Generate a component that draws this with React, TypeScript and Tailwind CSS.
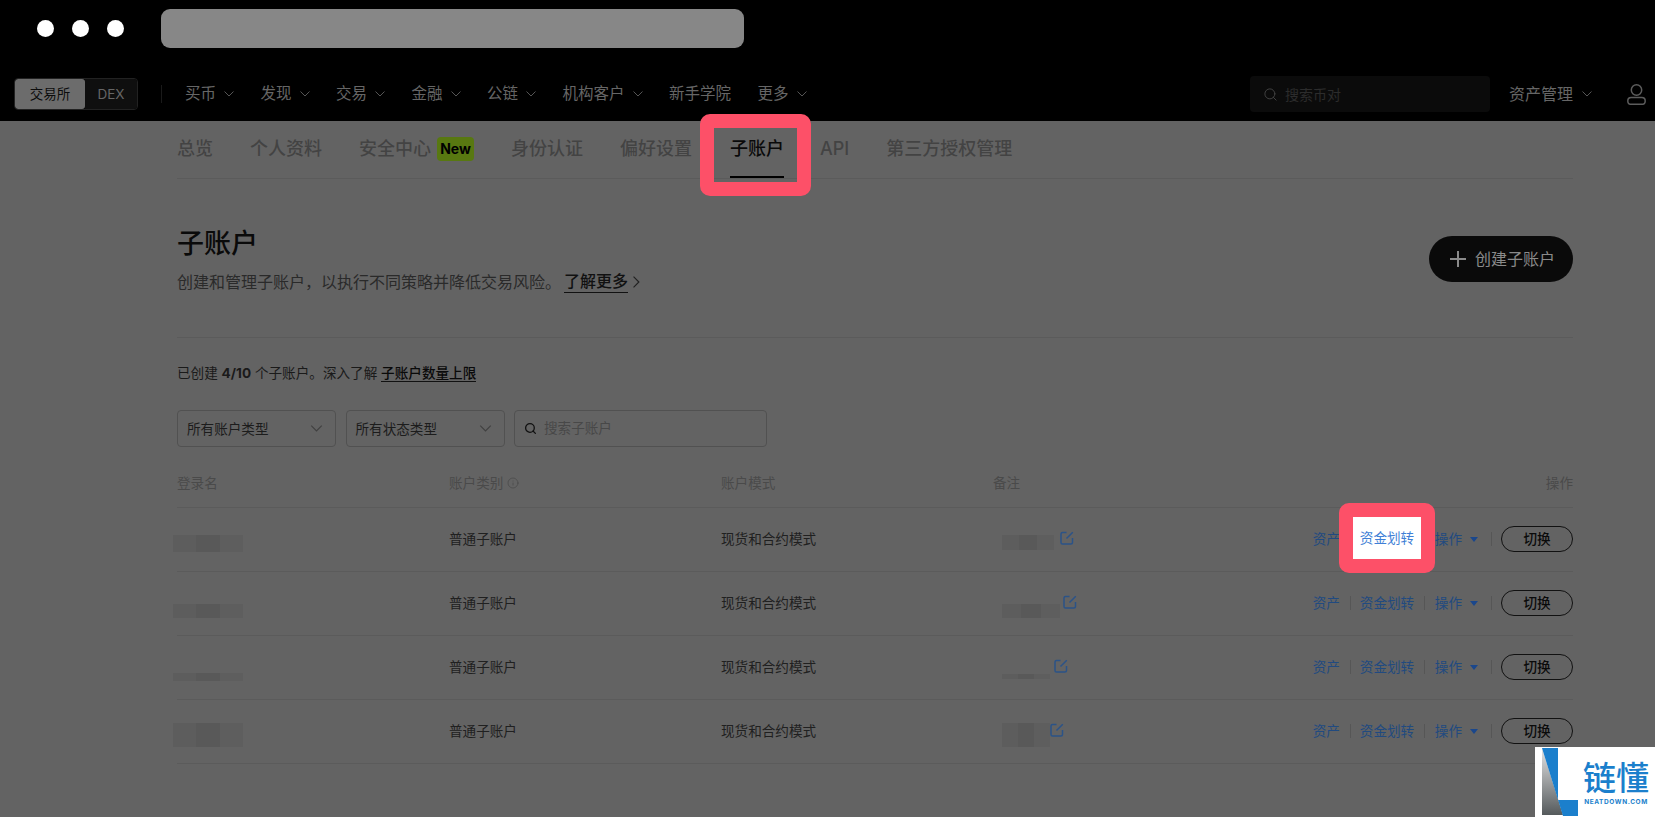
import { Info, Search } from 'lucide-react'

const navItems = [
  { label: '买币', arrow: true },
  { label: '发现', arrow: true },
  { label: '交易', arrow: true },
  { label: '金融', arrow: true },
  { label: '公链', arrow: true },
  { label: '机构客户', arrow: true },
  { label: '新手学院', arrow: false },
  { label: '更多', arrow: true },
]

const tabs = ['总览', '个人资料', '安全中心', '身份认证', '偏好设置', '子账户', 'API', '第三方授权管理']

// blurred-out names and notes sit at different heights per row
const rows = [
  {
    name: 'mt-[27px] h-[17px]',
    note: 'mt-[27px] h-[15px] w-[52px]',
    edit: 'ml-[6px]',
  },
  {
    name: 'mt-[32px] h-[14px]',
    note: 'mt-[32px] h-[14px] w-[58px]',
    edit: 'ml-[3px]',
  },
  {
    name: 'mt-[37px] h-[8px]',
    note: 'mt-[38px] h-[5px] w-[48px]',
    edit: 'ml-[4px]',
  },
  {
    name: 'mt-[23px] h-[24px]',
    note: 'mt-[23px] h-[24px] w-[48px]',
    edit: 'ml-[0px]',
  },
]

function Chevron({ className }: { className?: string }) {
  return (
    <svg viewBox="0 0 10 6" fill="none" stroke="currentColor" strokeWidth="1" className={className}>
      <path d="M0.5 0.5L5 5L9.5 0.5" />
    </svg>
  )
}

function EditIcon({ className }: { className?: string }) {
  return (
    <svg viewBox="0 0 14 14" fill="none" stroke="currentColor" strokeWidth="1.5" className={className}>
      <path d="M6.5 1.5H2.5C1.7 1.5 1 2.2 1 3V11.5C1 12.3 1.7 13 2.5 13H11C11.8 13 12.5 12.3 12.5 11.5V7" />
      <path d="M6.5 7.5L12.8 1.2" />
    </svg>
  )
}

function Mosaic({ className }: { className: string }) {
  return (
    <div className={`flex ${className}`}>
      <div className="h-full flex-1 bg-[#5d5d5d]" />
      <div className="h-full flex-1 bg-[#595959]" />
      <div className="h-full flex-1 bg-[#5e5e5e]" />
    </div>
  )
}

function Header() {
  return (
    <header className="h-[121px] bg-black">
      <div className="flex h-[48px] items-end pl-[37px]">
        <div className="flex h-[39px] items-center gap-[18px]">
          <span className="h-[17px] w-[17px] rounded-full bg-white" />
          <span className="h-[17px] w-[17px] rounded-full bg-white" />
          <span className="h-[17px] w-[17px] rounded-full bg-white" />
          <div className="ml-[19px] h-[39px] w-[583px] rounded-[9px] bg-[#878787]" />
        </div>
      </div>
      <div className="mt-[28px] flex h-[36px] items-center pl-[14px] pr-[9px]">
        <div className="flex h-[32px] w-[124px] overflow-hidden rounded-[4px] border border-[#222] text-[13.5px]">
          <div className="flex w-[70px] items-center justify-center rounded-[3px] bg-[#6c6c6c] text-[#0c0c0c]">交易所</div>
          <div className="flex flex-1 items-center justify-center bg-[#0f0f0f] text-[#666]">DEX</div>
        </div>
        <div className="ml-[23px] h-[18px] w-px bg-[#1a1a1a]" />
        <nav className="ml-[23px] flex items-center gap-[26.5px] text-[15.5px] text-[#666]">
          {navItems.map((item) => (
            <div key={item.label} className="flex items-center gap-[8px]">
              <span>{item.label}</span>
              {item.arrow && <Chevron className="h-[6px] w-[10px] text-[#555]" />}
            </div>
          ))}
        </nav>
        <div className="ml-auto flex h-[36px] w-[240px] items-center gap-[7px] rounded-[4px] bg-[#0b0b0b] pl-[13px] text-[14px] text-[#2c2c2c]">
          <Search size={15} strokeWidth={1.5} className="text-[#444]" />
          <span>搜索币对</span>
        </div>
        <div className="ml-[19px] flex items-center gap-[9px] text-[16px] text-[#666]">
          <span>资产管理</span>
          <Chevron className="h-[6px] w-[10px] text-[#555]" />
        </div>
        <svg viewBox="0 0 19 21" fill="none" stroke="#5c5c5c" strokeWidth="1.5" className="ml-[35px] h-[21px] w-[19px]">
          <circle cx="9.5" cy="6" r="5.2" />
          <rect x="0.8" y="13.6" width="17.4" height="6.7" rx="3.35" />
        </svg>
      </div>
    </header>
  )
}

function Tabs() {
  return (
    <div className="flex h-[58px] gap-[37px] border-b border-[#5b5b5b] pt-[15px] text-[18px] leading-[26px] text-[#434343]">
      {tabs.map((tab) =>
        tab === '子账户' ? (
          <div key={tab} className="ml-[1px] mr-[-1px] border-b-2 border-black font-medium text-[#0a0a0a]">
            {tab}
          </div>
        ) : (
          <div key={tab} className="flex h-[26px] items-center gap-[6px] font-medium">
            <span>{tab}</span>
            {tab === '安全中心' && (
              <span className="flex h-[24px] w-[37px] items-center justify-center rounded-[4px] bg-[#587811] text-[14px] font-bold text-black">
                New
              </span>
            )}
          </div>
        ),
      )}
    </div>
  )
}

function TableRow({ row }: { row: (typeof rows)[number] }) {
  return (
    <div className="grid h-[64px] grid-cols-[272px_272px_272px_1fr_auto] items-center border-b border-[#5b5b5b] pb-[1px] text-[13.6px] text-[#202020]">
      <div className="ml-[-4px] flex h-full items-start">
        <Mosaic className={`w-[70px] ${row.name}`} />
      </div>
      <div>普通子账户</div>
      <div>现货和合约模式</div>
      <div className="flex h-full items-start pl-[9px]">
        <Mosaic className={row.note} />
        <EditIcon className={`mt-[23px] h-[14px] w-[14px] text-[#2b5388] ${row.edit}`} />
      </div>
      <div className="flex items-center text-[#214a80]">
        <span>资产</span>
        <span className="ml-[10px] h-[14px] w-px bg-[#565656]" />
        <span className="ml-[9px]">资金划转</span>
        <span className="ml-[9.6px] h-[14px] w-px bg-[#565656]" />
        <span className="ml-[10px]">操作</span>
        <svg viewBox="0 0 8 5" className="ml-[8px] h-[5px] w-[8px] fill-[#1a478c]">
          <path d="M0 0H8L4 5Z" />
        </svg>
        <span className="ml-[13px] h-[14px] w-px bg-[#565656]" />
        <button className="ml-[9px] flex h-[26px] w-[72px] items-center justify-center rounded-full border border-[#111] font-medium text-[#0a0a0a]">
          切换
        </button>
      </div>
    </div>
  )
}

function Watermark() {
  return (
    <div className="absolute bottom-0 right-0 flex h-[70px] w-[120px] bg-white">
      <svg viewBox="0 0 36 68" className="ml-[7px] mt-[1px] h-[68px] w-[36px]">
        <defs>
          <linearGradient id="wm" x1="0" y1="0" x2="0" y2="1">
            <stop offset="0" stopColor="#e4e4e4" />
            <stop offset="1" stopColor="#555a5c" />
          </linearGradient>
        </defs>
        <path d="M0 0V67H21Z" fill="url(#wm)" />
        <path d="M0 0H16V52H36V68H21Z" fill="#1b7fcc" />
      </svg>
      <div className="ml-[5px] flex flex-col items-center pt-[12px]">
        <div className="text-[33px] font-medium leading-[38px] text-[#1b7fcc]">链懂</div>
        <div className="mt-[1px] text-[6.5px] font-bold leading-[9px] tracking-[0.6px] text-[#1b7fcc]">NEATDOWN.COM</div>
      </div>
    </div>
  )
}

export default function App() {
  return (
    <div className="relative h-[817px] w-full overflow-hidden bg-[#636363] font-['Inter','Noto_Sans_CJK_SC',sans-serif]">
      <Header />
      <main className="ml-[177px] w-[1396px]">
        <Tabs />
        <div className="flex items-center justify-between border-b border-[#5b5b5b] pb-[43px] pt-[46px]">
          <div>
            <h1 className="mt-[1px] text-[27px] font-medium leading-[36px] text-[#0a0a0a]">子账户</h1>
            <p className="mt-[8px] flex items-center text-[16px] leading-[24px] text-[#2a2a2a]">
              创建和管理子账户，以执行不同策略并降低交易风险。
              <span className="ml-[3px] border-b border-[#111] font-medium leading-[21px] text-[#111]">了解更多</span>
              <Chevron className="ml-[5px] h-[12px] w-[7px] [transform:rotate(-90deg)_scale(1.7)] text-[#222]" />
            </p>
          </div>
          <button className="mb-[2px] flex h-[46px] w-[144px] items-center gap-[9px] rounded-full bg-[#0a0a0a] pl-[21px] text-[16px] text-[#8a8a8a]">
            <svg viewBox="0 0 16 16" stroke="currentColor" strokeWidth="2" className="h-[16px] w-[16px]">
              <path d="M8 0V16M0 8H16" />
            </svg>
            创建子账户
          </button>
        </div>
        <p className="mt-[25px] text-[13.6px] leading-[20px] text-[#1a1a1a]">
          已创建 <b className="font-bold">4/10</b> 个子账户。深入了解{' '}
          <span className="border-b border-[#111] font-medium text-[#0a0a0a]">子账户数量上限</span>
        </p>
        <div className="mt-[27px] flex gap-[9.5px] text-[13.6px] text-[#1c1c1c]">
          <div className="flex h-[37px] w-[159px] items-center justify-between rounded-[4px] border border-[#515151] pl-[9px] pr-[12px]">
            <span className="mt-[2px]">所有账户类型</span>
            <Chevron className="h-[7px] w-[13px] text-[#404040]" />
          </div>
          <div className="flex h-[37px] w-[159px] items-center justify-between rounded-[4px] border border-[#515151] pl-[9px] pr-[12px]">
            <span className="mt-[2px]">所有状态类型</span>
            <Chevron className="h-[7px] w-[13px] text-[#404040]" />
          </div>
          <div className="flex h-[37px] w-[253px] items-center gap-[7px] rounded-[4px] border border-[#515151] pl-[9px] text-[#484848]">
            <Search size={13} strokeWidth={2.4} className="text-[#111]" />
            搜索子账户
          </div>
        </div>
        <div className="grid h-[61px] grid-cols-[272px_272px_272px_1fr_auto] items-center border-b border-[#5b5b5b] pt-[12px] text-[13.6px] text-[#4a4a4a]">
          <div>登录名</div>
          <div className="flex items-center gap-[4px]">
            账户类别
            <Info size={12} strokeWidth={1.5} />
          </div>
          <div>账户模式</div>
          <div>备注</div>
          <div>操作</div>
        </div>
        {rows.map((row, i) => (
          <TableRow key={i} row={row} />
        ))}
      </main>
      {/* tutorial callouts drawn over the page */}
      <div className="absolute left-[700px] top-[114px] h-[82px] w-[111px] rounded-[10px] border-[14px] border-[#fd5068]" />
      <div className="absolute left-[1339px] top-[503px] flex h-[70px] w-[96px] items-center justify-center rounded-[10px] border-[14px] border-[#fd5068] bg-white text-[13.6px] text-[#3f7fd6]">
        资金划转
      </div>
      <Watermark />
    </div>
  )
}
